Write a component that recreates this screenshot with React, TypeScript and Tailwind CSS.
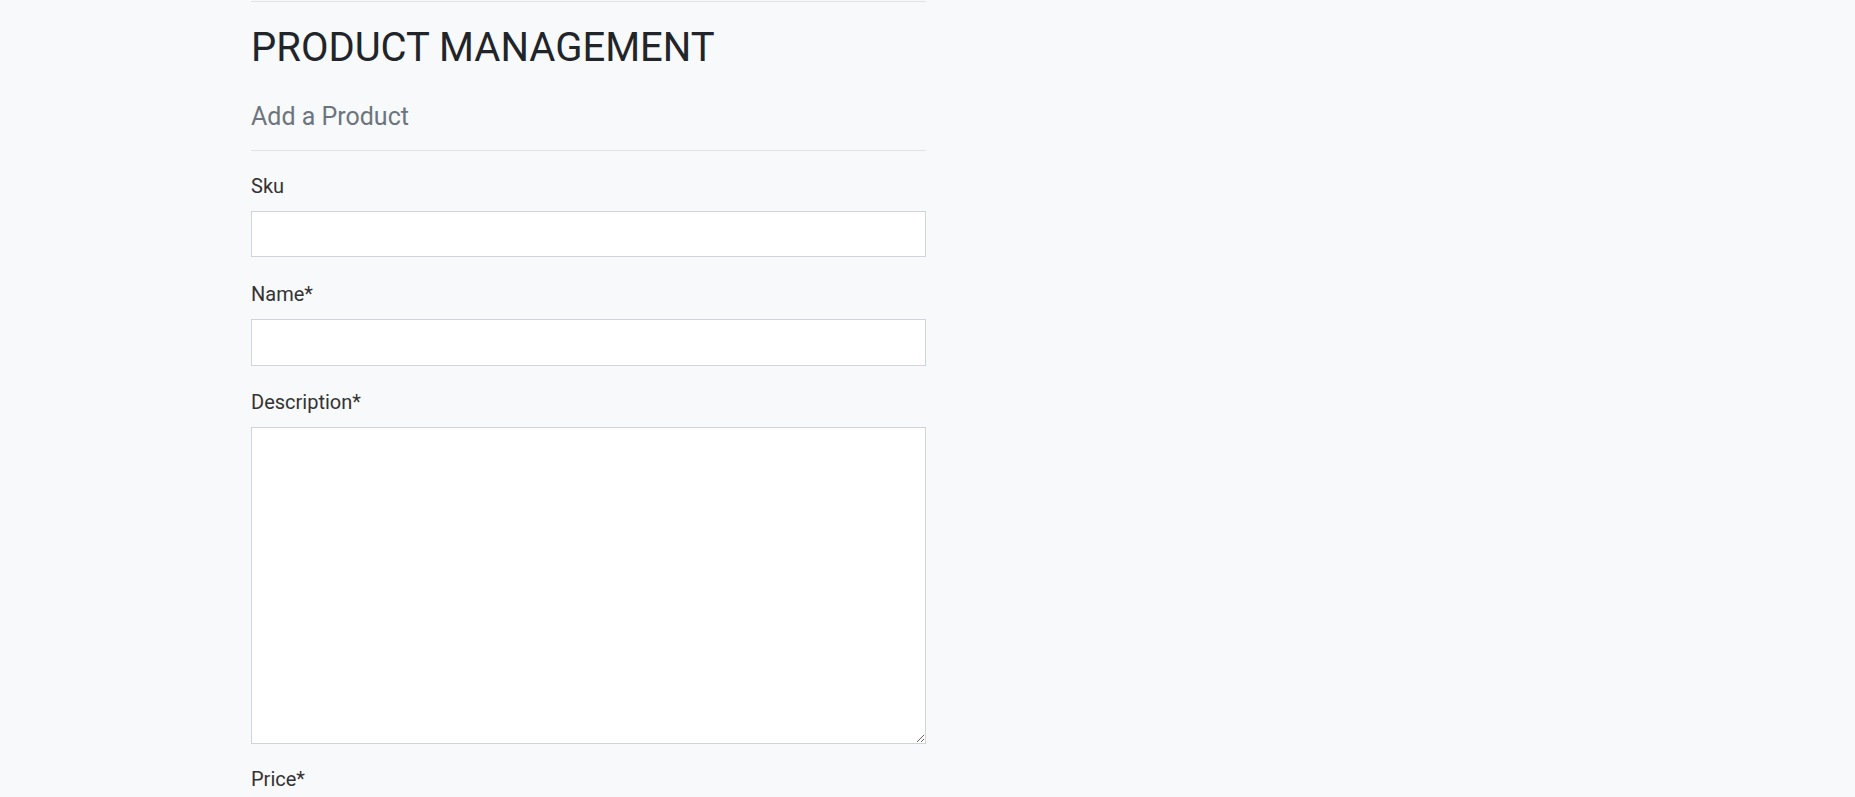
export default function App() {
  return (
    <div className="min-h-screen bg-[#f8f9fa] font-['Roboto',sans-serif] text-[#212529]">
      <div className="ml-[251px] w-[675px] pt-px">
        <hr className="border-t border-[#e2e3e5]" />
        <h1 className="mt-[22px] text-[40px] leading-[48px] font-normal">PRODUCT MANAGEMENT</h1>
        <h4 className="mt-[30px] text-[25px] leading-[30px] text-[#6c757d]">Add a Product</h4>
        <hr className="mt-[18px] mb-5 border-t border-[#e2e3e5]" />

        <form className="flex flex-col text-[#333]">
          <div className="mb-[22px]">
            <label className="mb-2.5 block text-[20px] leading-[30px]">Sku</label>
            <input type="text" className="block h-[46px] w-full border border-[#ced4da] bg-white px-3" />
          </div>
          <div className="mb-[21px]">
            <label className="mb-2.5 block text-[20px] leading-[30px]">Name*</label>
            <input type="text" className="block h-[47px] w-full border border-[#ced4da] bg-white px-3" />
          </div>
          <div className="mb-5">
            <label className="mb-2.5 block text-[20px] leading-[30px]">Description*</label>
            <textarea className="block h-[317px] w-full border border-[#ced4da] bg-white px-3 py-2" />
          </div>
          <div>
            <label className="mb-2.5 block text-[20px] leading-[30px]">Price*</label>
            <input type="number" className="block h-[46px] w-full border border-[#ced4da] bg-white px-3" />
          </div>
        </form>
      </div>
    </div>
  );
}
